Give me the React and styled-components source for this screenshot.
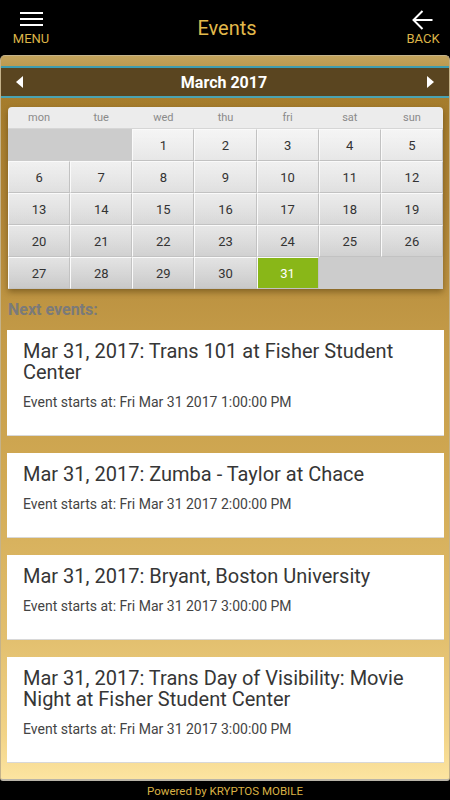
import styled, { createGlobalStyle } from "styled-components";

const GlobalStyle = createGlobalStyle`
  html, body {
    margin: 0;
    padding: 0;
    background: #000;
  }
  * {
    box-sizing: border-box;
  }
`;

const weekdays = ["mon", "tue", "wed", "thu", "fri", "sat", "sun"];

const events = [
  { title: "Mar 31, 2017: Trans 101 at Fisher Student Center", time: "Fri Mar 31 2017 1:00:00 PM" },
  { title: "Mar 31, 2017: Zumba - Taylor at Chace", time: "Fri Mar 31 2017 2:00:00 PM" },
  { title: "Mar 31, 2017: Bryant, Boston University", time: "Fri Mar 31 2017 3:00:00 PM" },
  { title: "Mar 31, 2017: Trans Day of Visibility: Movie Night at Fisher Student Center", time: "Fri Mar 31 2017 3:00:00 PM" },
];

// march 2017 starts on a wednesday (2 blanks with monday first)
function buildCells() {
  const cells = [];
  for (let i = 0; i < 2; i++) cells.push(null);
  for (let d = 1; d <= 31; d++) cells.push(d);
  while (cells.length % 7) cells.push(null);
  return cells;
}

function App() {
  const cells = buildCells();
  return (
    <Screen>
      <GlobalStyle />
      <TopBar>
        <NavButton>
          <MenuIcon>
            <span />
            <span />
            <span />
          </MenuIcon>
          <NavLabel>MENU</NavLabel>
        </NavButton>
        <PageTitle>Events</PageTitle>
        <NavButton>
          <svg width="21" height="20" viewBox="0 0 21 20">
            <path d="M20.5 10H2M10.5 1L1.5 10l9 9" fill="none" stroke="#fff" strokeWidth="2" />
          </svg>
          <NavLabel>BACK</NavLabel>
        </NavButton>
      </TopBar>

      <Panel>
        <MonthBar>
          <Arrow dir="left" />
          <MonthTitle>March 2017</MonthTitle>
          <Arrow dir="right" />
        </MonthBar>

        <Content>
          <Calendar>
            <WeekRow>
              {weekdays.map((w) => (
                <WeekName key={w}>{w}</WeekName>
              ))}
            </WeekRow>
            <DayGrid>
              {cells.map((d, i) =>
                d === null ? (
                  <EmptyCell key={i} />
                ) : (
                  <DayCell key={i} $today={d === 31}>
                    {d}
                  </DayCell>
                )
              )}
            </DayGrid>
          </Calendar>

          <SectionTitle>Next events:</SectionTitle>

          <EventList>
            {events.map((ev, i) => (
              <EventCard key={i}>
                <EventTitle>{ev.title}</EventTitle>
                <EventTime>Event starts at: {ev.time}</EventTime>
              </EventCard>
            ))}
          </EventList>
        </Content>
      </Panel>

      <Footer>Powered by KRYPTOS MOBILE</Footer>
    </Screen>
  );
}

const Screen = styled.div`
  width: 450px;
  height: 800px;
  display: flex;
  flex-direction: column;
  background: #000;
  font-family: Roboto, "Liberation Sans", sans-serif;
  overflow: hidden;
`;

const TopBar = styled.header`
  height: 55px;
  flex-shrink: 0;
  display: flex;
  align-items: center;
  justify-content: space-between;
  padding: 0 10px 0 14px;
`;

const NavButton = styled.div`
  display: flex;
  flex-direction: column;
  align-items: center;
  gap: 3px;
  width: 34px;
`;

const MenuIcon = styled.div`
  width: 23px;
  height: 14px;
  display: flex;
  flex-direction: column;
  justify-content: space-between;
  margin: 1px 0 4px;

  span {
    display: block;
    height: 2px;
    background: #fff;
  }
`;

const NavLabel = styled.span`
  color: #dcb448;
  font-size: 13px;
  line-height: 12px;
`;

const PageTitle = styled.h1`
  margin: 0;
  color: #e2b94b;
  font-size: 20px;
  font-weight: 400;
  padding-top: 1px;
`;

const Panel = styled.main`
  flex: 1;
  display: flex;
  flex-direction: column;
  border: 1px solid #c4b28a;
  border-bottom: 2px solid #b9b4a8;
  border-radius: 5px 5px 3px 3px;
  padding-top: 10px;
  background: linear-gradient(
    to bottom,
    #c3a35c 0px,
    #a57c2c 45px,
    #b08536 150px,
    #c39a47 280px,
    #d1a953 420px,
    #e2bf6e 580px,
    #f2d488 680px,
    #fce4a0 722px
  );
  overflow: hidden;
`;

const MonthBar = styled.div`
  height: 32px;
  display: flex;
  align-items: center;
  justify-content: space-between;
  padding: 0 14px;
  background: #5a4520;
  border-top: 2px solid #3f9db0;
  border-bottom: 2px solid #4aa3b2;
`;

const Arrow = styled.span`
  width: 0;
  height: 0;
  border-top: 6px solid transparent;
  border-bottom: 6px solid transparent;
  ${(p) =>
    p.dir === "left"
      ? "border-right: 7px solid #fff; margin-left: 1px;"
      : "border-left: 7px solid #fff; margin-right: 1px;"}
`;

const MonthTitle = styled.span`
  color: #fff;
  font-weight: 700;
  font-size: 16px;
  padding-right: 2px;
`;

const Content = styled.div`
  padding: 9px 5px 0 6px;
`;

const Calendar = styled.div`
  margin: 0 1px;
  border-radius: 4px 4px 0 0;
  overflow: hidden;
  box-shadow: 0 3px 6px rgba(60, 40, 0, 0.45);
`;

const WeekRow = styled.div`
  display: grid;
  grid-template-columns: repeat(7, 1fr);
  height: 22px;
  background: #ececec;
  border-bottom: 1px solid #d6d6d6;
`;

const WeekName = styled.span`
  display: flex;
  align-items: center;
  justify-content: center;
  color: #8a8a8a;
  font-size: 11px;
`;

const DayGrid = styled.div`
  display: grid;
  grid-template-columns: repeat(7, 1fr);
  grid-auto-rows: 32px;
  background: linear-gradient(to bottom, #eeeeee, #c9c9c9);
`;

const DayCell = styled.div`
  display: flex;
  align-items: center;
  justify-content: center;
  font-size: 13px;
  color: ${(p) => (p.$today ? "#fff" : "#333")};
  background: ${(p) =>
    p.$today
      ? "#89b718"
      : "linear-gradient(to bottom, rgba(255,255,255,0.4), rgba(255,255,255,0))"};
  border-top: 1px solid #fafafa;
  border-left: 1px solid #fafafa;
  border-right: 1px solid #c2c2c2;
  border-bottom: 1px solid #c2c2c2;
`;

const EmptyCell = styled.div`
  background: #cccccc;
`;

const SectionTitle = styled.h2`
  margin: 11px 0 10px 1px;
  color: #7a7a7a;
  font-size: 16px;
  line-height: 20px;
  font-weight: 700;
`;

const EventList = styled.div`
  display: flex;
  flex-direction: column;
  gap: 17px;
`;

const EventCard = styled.div`
  background: #fff;
  padding: 11px 16px 23px;
  border-bottom: 1px solid #d8d8d8;
`;

const EventTitle = styled.div`
  color: #363636;
  font-size: 20px;
  line-height: 21px;
  font-weight: 400;
`;

const EventTime = styled.div`
  margin-top: 9px;
  color: #444;
  font-size: 14px;
  line-height: 20px;
`;

const Footer = styled.footer`
  height: 19px;
  flex-shrink: 0;
  display: flex;
  align-items: center;
  justify-content: center;
  color: #d9b145;
  font-size: 11.5px;
`;

export default App;
